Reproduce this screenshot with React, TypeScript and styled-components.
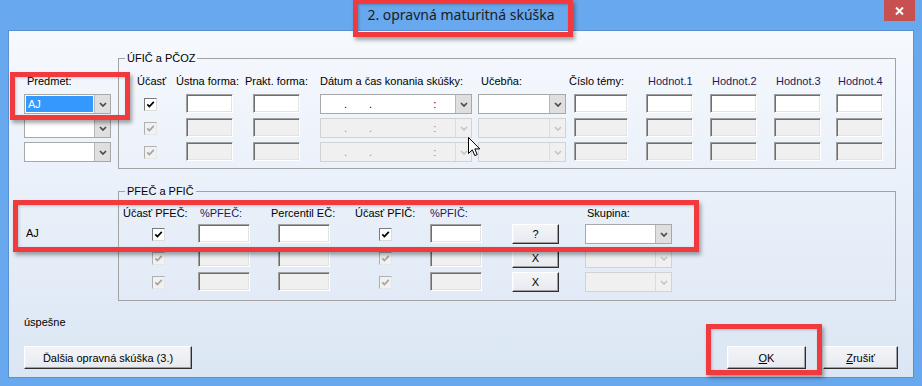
import React from "react";
import styled, { createGlobalStyle } from "styled-components";

const GlobalStyle = createGlobalStyle`
  html, body { margin: 0; padding: 0; background: #68a8ee; }
  body {
    font-family: "Liberation Sans", Arial, sans-serif;
    font-size: 11px;
    color: #000;
  }
`;

const Window = styled.div`
  position: relative;
  width: 922px;
  height: 386px;
  background: #68a8ee;
  display: flex;
  flex-direction: column;
  overflow: hidden;
`;

const TitleBar = styled.div`
  height: 30px;
  flex: none;
  display: grid;
  grid-template-columns: 1fr auto 1fr;
  align-items: start;
`;

const TitleText = styled.div`
  grid-column: 2;
  font-family: "Noto Sans", "Open Sans", sans-serif;
  font-size: 14px;
  line-height: 30px;
  color: #1c1c1c;
`;

const CloseButton = styled.div`
  grid-column: 3;
  justify-self: end;
  margin-right: 7px;
  width: 31px;
  height: 21px;
  background: #c75050;
  display: flex;
  align-items: center;
  justify-content: center;
`;

const Client = styled.div`
  flex: 1;
  margin: 0 8px 8px;
  border: 1px solid #5a8fd1;
  background: linear-gradient(to bottom, #f6f9fe, #dbe6f4);
  display: flex;
  flex-direction: column;
`;

const Section = styled.div<{ $mt: number }>`
  display: flex;
  align-items: flex-start;
  margin-top: ${(p) => p.$mt}px;
`;

const Side = styled.div<{ $pl: number; $pt: number }>`
  width: 109px;
  flex: none;
  box-sizing: border-box;
  padding-left: ${(p) => p.$pl}px;
  padding-top: ${(p) => p.$pt}px;
`;

const SideGrid = styled.div`
  width: 87px;
  display: grid;
  grid-template-columns: minmax(0, 1fr);
  grid-template-rows: 15px repeat(3, 20px);
  row-gap: 4px;
`;

const SideLabel = styled.div`
  line-height: 13px;
  padding-left: 3px;
`;

const SubjectText = styled.div`
  line-height: 13px;
`;

const Group = styled.fieldset<{ $pt: number; $pb: number }>`
  margin: 0;
  width: 778px;
  min-width: 0;
  box-sizing: border-box;
  border: 1px solid #a3a3a3;
  padding: ${(p) => p.$pt}px 0 ${(p) => p.$pb}px 0;
`;

const Caption = styled.legend`
  margin-left: 6px;
  padding: 0 2px;
  line-height: 13px;
  font-size: 11px;
`;

const Cols = styled.div<{ $head: number }>`
  display: flex;
  align-items: flex-start;
  --head: ${(p) => p.$head}px;
`;

const Col = styled.div<{ $w: number; $ml: number }>`
  flex: none;
  width: ${(p) => p.$w}px;
  margin-left: ${(p) => p.$ml}px;
  display: grid;
  grid-template-columns: minmax(0, 1fr);
  grid-template-rows: var(--head) repeat(3, 20px);
  row-gap: 4px;
`;

const ColLabel = styled.div<{ $lx?: number; $navy?: boolean }>`
  justify-self: start;
  margin-left: ${(p) => p.$lx ?? 0}px;
  white-space: nowrap;
  line-height: 13px;
  color: ${(p) => (p.$navy ? "#1d1a62" : "#000")};
`;

const TextBox = styled.div<{ $off?: boolean }>`
  height: 19px;
  box-sizing: border-box;
  border: 1px solid;
  border-color: #a0a0a0 #fff #fff #a0a0a0;
  box-shadow: inset 1px 1px #6e6e6e, inset -1px -1px #e3e3e3;
  background: ${(p) => (p.$off ? "#f0f0f0" : "#fff")};
`;

const CheckBox = styled.span<{ $off?: boolean }>`
  justify-self: center;
  align-self: center;
  width: 13px;
  height: 13px;
  box-sizing: border-box;
  display: flex;
  align-items: center;
  justify-content: center;
  border: 1px solid;
  border-color: ${(p) =>
    p.$off ? "#b0b0b0 #e6e6e6 #e6e6e6 #b0b0b0" : "#7a7a7a #dcdcdc #dcdcdc #7a7a7a"};
  background: ${(p) => (p.$off ? "#f1f1f1" : "#fff")};
  color: ${(p) => (p.$off ? "#a4a4a4" : "#000")};
`;

const ComboBox = styled.div<{ $off?: boolean }>`
  height: 20px;
  box-sizing: border-box;
  display: flex;
  border: 1px solid ${(p) => (p.$off ? "#d2d2d2" : "#a8a8a8")};
  background: ${(p) => (p.$off ? "#f0f0f0" : "#fff")};
  color: ${(p) => (p.$off ? "#8a8a8a" : "#000")};
`;

const ComboField = styled.div`
  flex: 1;
  min-width: 0;
  display: flex;
  align-items: center;
  padding: 1px;
  line-height: 13px;
`;

const DropButton = styled.div<{ $off?: boolean }>`
  flex: none;
  width: 15px;
  display: flex;
  align-items: center;
  justify-content: center;
  border-left: 1px solid ${(p) => (p.$off ? "#dcdcdc" : "#b8b8b8")};
  background: ${(p) => (p.$off ? "#f0f0f0" : "#dfdfdf")};
  color: ${(p) => (p.$off ? "#c6c6c6" : "#4a4a4a")};
`;

const Selected = styled.span`
  flex: 1;
  align-self: stretch;
  display: flex;
  align-items: center;
  padding-left: 2px;
  background: #3399ff;
  color: #fff;
`;

const MaskChar = styled.span<{ $ml: number }>`
  margin-left: ${(p) => p.$ml}px;
  color: inherit;
`;

const PushButton = styled.button<{ $w: number; $h: number }>`
  width: ${(p) => p.$w}px;
  height: ${(p) => p.$h}px;
  padding: 0;
  font-family: "Liberation Sans", Arial, sans-serif;
  font-size: 11px;
  color: #000;
  border: 1px solid;
  border-color: #fff #2e2e2e #2e2e2e #fff;
  box-shadow: inset -1px -1px #a0a0a0, inset 1px 1px #f4f4f4;
  background: linear-gradient(to bottom, #f3f5f8, #e6e9ee);
  display: flex;
  align-items: center;
  justify-content: center;
`;

const Status = styled.div`
  margin: 15px 0 0 15px;
  line-height: 13px;
`;

const Footer = styled.div`
  display: flex;
  margin-top: 17px;
  padding: 0 15px;
  gap: 17px;
`;

const Spacer = styled.div`
  flex: 1;
`;

const Mark = styled.div<{ $x: number; $y: number; $w: number; $h: number }>`
  position: absolute;
  left: ${(p) => p.$x}px;
  top: ${(p) => p.$y}px;
  width: ${(p) => p.$w}px;
  height: ${(p) => p.$h}px;
  box-sizing: border-box;
  border: 5px solid #f03a3e;
  box-shadow: 2px 3px 4px rgba(0, 0, 0, 0.35), inset 1px 1px 3px rgba(0, 0, 0, 0.2);
  pointer-events: none;
`;

const Pointer = styled.svg`
  position: absolute;
  left: 468px;
  top: 137px;
`;

function Chevron() {
  return (
    <svg width="8" height="5" viewBox="0 0 8 5">
      <path d="M1 1 L4 4 L7 1" fill="none" stroke="currentColor" strokeWidth="1.7" />
    </svg>
  );
}

function Combo({ off, children }: { off?: boolean; children?: React.ReactNode }) {
  return (
    <ComboBox $off={off}>
      <ComboField>{children}</ComboField>
      <DropButton $off={off}>
        <Chevron />
      </DropButton>
    </ComboBox>
  );
}

function Check({ off }: { off?: boolean }) {
  return (
    <CheckBox $off={off}>
      <svg width="9" height="9" viewBox="0 0 9 9">
        <path d="M1.3 4.3 L3.4 6.5 L7.8 1.8" fill="none" stroke="currentColor" strokeWidth="1.7" />
      </svg>
    </CheckBox>
  );
}

function DateMask() {
  return (
    <>
      <MaskChar $ml={22}>.</MaskChar>
      <MaskChar $ml={22}>.</MaskChar>
      <MaskChar $ml={61}>:</MaskChar>
    </>
  );
}

const hodnoty = [
  { label: "Hodnot.1", ml: 18 },
  { label: "Hodnot.2", ml: 17 },
  { label: "Hodnot.3", ml: 17 },
  { label: "Hodnot.4", ml: 15 },
];

export default function App() {
  return (
    <>
      <GlobalStyle />
      <Window>
        <TitleBar>
          <TitleText>2. opravná maturitná skúška</TitleText>
          <CloseButton>
            <svg width="9" height="8" viewBox="0 0 9 8">
              <path d="M1 0.5 L8 7.5 M8 0.5 L1 7.5" stroke="#fff" strokeWidth="2" />
            </svg>
          </CloseButton>
        </TitleBar>

        <Client>
          <Section $mt={21}>
            <Side $pl={15} $pt={23}>
              <SideGrid>
                <SideLabel>Predmet:</SideLabel>
                <Combo>
                  <Selected>AJ</Selected>
                </Combo>
                <Combo />
                <Combo />
              </SideGrid>
            </Side>

            <Group $pt={10} $pb={6}>
              <Caption>ÚFIČ a PČOZ</Caption>
              <Cols $head={15}>
                <Col $w={13} $ml={25}>
                  <ColLabel $lx={-7}>Účasť</ColLabel>
                  <Check />
                  <Check off />
                  <Check off />
                </Col>
                <Col $w={47} $ml={29}>
                  <ColLabel $lx={-10}>Ústna forma:</ColLabel>
                  <TextBox />
                  <TextBox $off />
                  <TextBox $off />
                </Col>
                <Col $w={47} $ml={20}>
                  <ColLabel $lx={-8}>Prakt. forma:</ColLabel>
                  <TextBox />
                  <TextBox $off />
                  <TextBox $off />
                </Col>
                <Col $w={152} $ml={20}>
                  <ColLabel>Dátum a čas konania skúšky:</ColLabel>
                  <Combo><DateMask /></Combo>
                  <Combo off><DateMask /></Combo>
                  <Combo off><DateMask /></Combo>
                </Col>
                <Col $w={88} $ml={6}>
                  <ColLabel $lx={3}>Učebňa:</ColLabel>
                  <Combo />
                  <Combo off />
                  <Combo off />
                </Col>
                <Col $w={54} $ml={8}>
                  <ColLabel $lx={-5}>Číslo témy:</ColLabel>
                  <TextBox />
                  <TextBox $off />
                  <TextBox $off />
                </Col>
                {hodnoty.map((h) => (
                  <Col key={h.label} $w={47} $ml={h.ml}>
                    <ColLabel $lx={2} $navy>
                      {h.label}
                    </ColLabel>
                    <TextBox />
                    <TextBox $off />
                    <TextBox $off />
                  </Col>
                ))}
              </Cols>
            </Group>
          </Section>

          <Section $mt={16}>
            <Side $pl={17} $pt={42}>
              <SubjectText>AJ</SubjectText>
            </Side>

            <Group $pt={9} $pb={8}>
              <Caption>PFEČ a PFIČ</Caption>
              <Cols $head={13}>
                <Col $w={13} $ml={33}>
                  <ColLabel $lx={-29}>Účasť PFEČ:</ColLabel>
                  <Check />
                  <Check off />
                  <Check off />
                </Col>
                <Col $w={52} $ml={33}>
                  <ColLabel $lx={2} $navy>%PFEČ:</ColLabel>
                  <TextBox />
                  <TextBox $off />
                  <TextBox $off />
                </Col>
                <Col $w={52} $ml={28}>
                  <ColLabel $lx={-7}>Percentil EČ:</ColLabel>
                  <TextBox />
                  <TextBox $off />
                  <TextBox $off />
                </Col>
                <Col $w={13} $ml={49}>
                  <ColLabel $lx={-24}>Účasť PFIČ:</ColLabel>
                  <Check />
                  <Check off />
                  <Check off />
                </Col>
                <Col $w={52} $ml={38}>
                  <ColLabel $navy>%PFIČ:</ColLabel>
                  <TextBox />
                  <TextBox $off />
                  <TextBox $off />
                </Col>
                <Col $w={47} $ml={30}>
                  <span />
                  <PushButton $w={47} $h={20}>?</PushButton>
                  <PushButton $w={47} $h={20}>X</PushButton>
                  <PushButton $w={47} $h={20}>X</PushButton>
                </Col>
                <Col $w={87} $ml={26}>
                  <ColLabel $lx={2}>Skupina:</ColLabel>
                  <Combo />
                  <Combo off />
                  <Combo off />
                </Col>
              </Cols>
            </Group>
          </Section>

          <Status>úspešne</Status>

          <Footer>
            <PushButton $w={168} $h={23}>Ďalšia opravná skúška (3.)</PushButton>
            <Spacer />
            <PushButton $w={79} $h={23}>
              <u>O</u>K
            </PushButton>
            <PushButton $w={75} $h={23}>
              <u>Z</u>rušiť
            </PushButton>
          </Footer>
        </Client>

        <Mark $x={353} $y={-1} $w={220} $h={38} />
        <Mark $x={10} $y={72} $w={120} $h={48} />
        <Mark $x={13} $y={200} $w={686} $h={52} />
        <Mark $x={706} $y={324} $w={116} $h={51} />

        <Pointer width="13" height="20" viewBox="0 0 13 20">
          <path
            d="M0.5 0.5 L0.5 16.5 L4.3 12.8 L6.8 18.6 L9.2 17.6 L6.8 11.9 L11.8 11.9 Z"
            fill="#fff"
            stroke="#000"
            strokeWidth="1"
            strokeLinejoin="round"
          />
        </Pointer>
      </Window>
    </>
  );
}
